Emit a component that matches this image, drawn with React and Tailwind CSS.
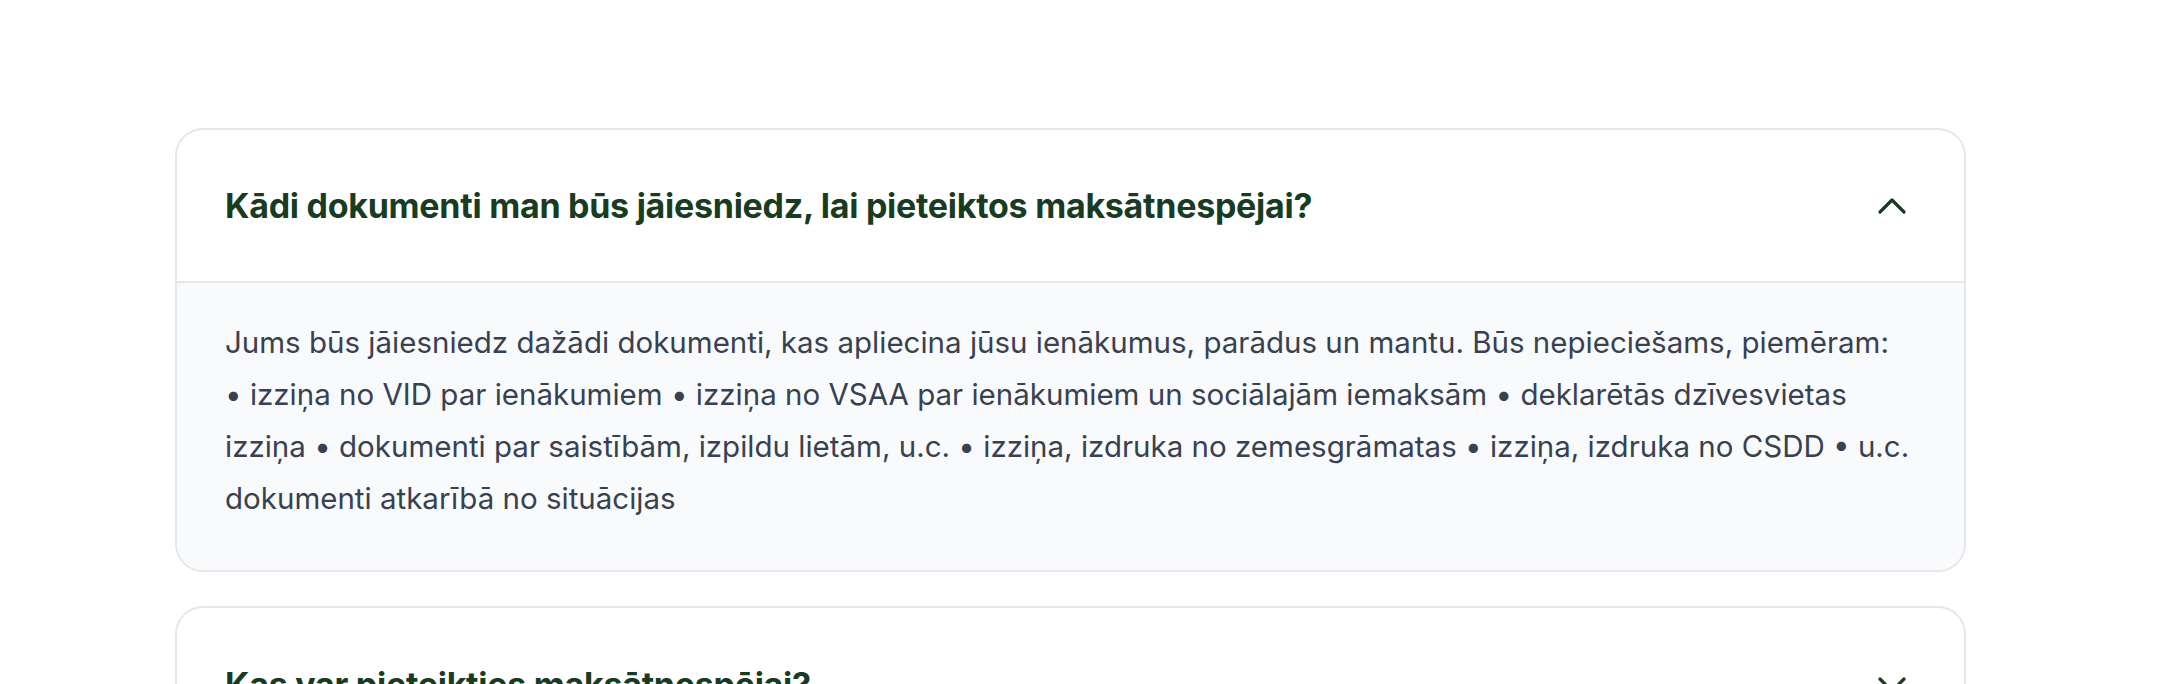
import React from "react";

function Chevron({ up }) {
  return (
    <svg width="40" height="40" viewBox="0 0 40 40" fill="none" className="shrink-0">
      <path
        d={up ? "M8 26 L20 14 L32 26" : "M8 14 L20 26 L32 14"}
        stroke="#173c22"
        strokeWidth="3.2"
        strokeLinecap="round"
        strokeLinejoin="round"
      />
    </svg>
  );
}

export default function App() {
  return (
    <div className="w-[2164px] h-[684px] overflow-hidden bg-white" style={{ fontFamily: "Inter, 'Noto Sans', sans-serif" }}>
      <div className="ml-[175px] w-[1791px] pt-[128px] flex flex-col gap-[34px]">
        <div className="rounded-[28px] border-2 border-[#e6e7eb] overflow-hidden bg-white">
          <div className="h-[153px] flex items-center justify-between pl-[48px] pr-[52px] border-b-2 border-[#e6e7eb]">
            <h3 className="text-[34px] font-bold tracking-[-0.008em] text-[#173c22]">
              Kādi dokumenti man būs jāiesniedz, lai pieteiktos maksātnespējai?
            </h3>
            <Chevron up />
          </div>
          <div className="bg-[#f9fafb] pl-[48px] pr-[40px] pt-[33px] pb-[46px]">
            <p className="text-[29.5px] leading-[52px] text-[#374151]">
              Jums būs jāiesniedz dažādi dokumenti, kas apliecina jūsu ienākumus, parādus un mantu. Būs nepieciešams, piemēram:
              <br />
              • izziņa no VID par ienākumiem • izziņa no VSAA par ienākumiem un sociālajām iemaksām • deklarētās dzīvesvietas
              <br />
              izziņa • dokumenti par saistībām, izpildu lietām, u.c. • izziņa, izdruka no zemesgrāmatas • izziņa, izdruka no CSDD • u.c.
              <br />
              dokumenti atkarībā no situācijas
            </p>
          </div>
        </div>
        <div className="rounded-[28px] border-2 border-[#e6e7eb] overflow-hidden bg-white">
          <div className="h-[153px] flex items-center justify-between pl-[48px] pr-[52px]">
            <h3 className="text-[34px] font-bold tracking-[-0.008em] text-[#173c22]">
              Kas var pieteikties maksātnespējai?
            </h3>
            <Chevron />
          </div>
        </div>
      </div>
    </div>
  );
}
